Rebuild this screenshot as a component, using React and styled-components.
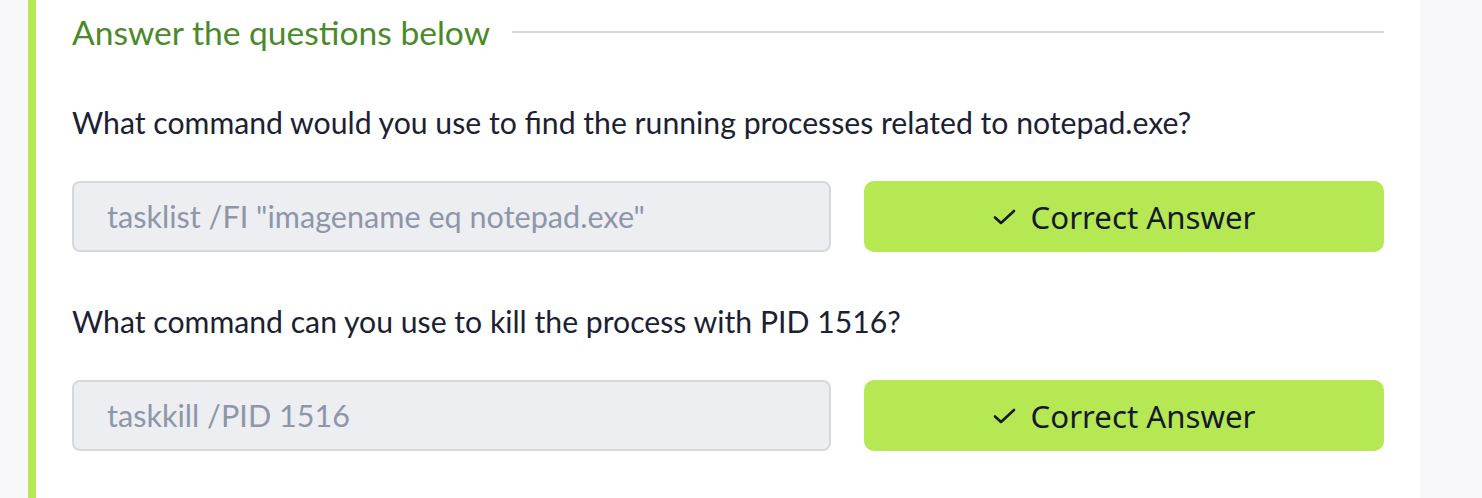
import React from 'react';
import styled, { createGlobalStyle } from 'styled-components';

const colors = {
  page: '#f8f8fa',
  lime: '#b5e853',
  green: '#4a8a2a',
  text: '#1b2132',
  muted: '#8e96a8',
  field: '#edeef2',
  fieldBorder: '#d5d8de',
  rule: '#d2d6dc',
};

const GlobalStyle = createGlobalStyle`
  html, body {
    margin: 0;
    padding: 0;
    background: ${colors.page};
  }
  * {
    box-sizing: border-box;
  }
`;

const Page = styled.div`
  display: flex;
  min-height: 498px;
  padding: 0 62px 0 28px;
  font-family: 'Lato', 'Liberation Sans', sans-serif;
`;

const Panel = styled.section`
  flex: 1;
  background: #ffffff;
  border-left: 8px solid ${colors.lime};
  padding: 10px 36px 0 36px;
`;

const HeadingRow = styled.div`
  display: flex;
  align-items: center;
  gap: 22px;
`;

const Heading = styled.h3`
  margin: 0;
  font-size: 33.6px;
  font-weight: 400;
  line-height: 44px;
  color: ${colors.green};
  white-space: nowrap;
`;

const Rule = styled.div`
  flex: 1;
  height: 2px;
  background: ${colors.rule};
`;

const Question = styled.div`
  margin-top: ${(p) => p.$top}px;
`;

const Prompt = styled.p`
  margin: 0;
  font-size: 30.2px;
  line-height: 40px;
  color: ${colors.text};
`;

const AnswerRow = styled.div`
  display: grid;
  grid-template-columns: 759fr 520fr;
  gap: 33px;
  margin-top: 39px;
`;

const AnswerField = styled.input`
  height: 71px;
  width: 100%;
  padding: 0 33px;
  border: 2px solid ${colors.fieldBorder};
  border-radius: 8px;
  background: ${colors.field};
  font-family: 'Lato', 'Liberation Sans', sans-serif;
  font-size: 30.6px;
  color: ${colors.muted};
  outline: none;

  &::placeholder {
    color: ${colors.muted};
  }
`;

const CorrectButton = styled.button`
  height: 71px;
  display: flex;
  align-items: center;
  justify-content: center;
  gap: 15px;
  border: none;
  border-radius: 10px;
  background: ${colors.lime};
  color: #141a2b;
  font-family: 'Noto Sans', 'Lato', sans-serif;
  font-size: 31.2px;
  cursor: default;
`;

const CheckIcon = () => (
  <svg width="23" height="16" viewBox="0 0 23 16" fill="none">
    <polyline
      points="2,8.5 8,14 21,2"
      stroke="#141a2b"
      strokeWidth="2.6"
      strokeLinecap="round"
      strokeLinejoin="round"
    />
  </svg>
);

const questions = [
  {
    prompt: 'What command would you use to find the running processes related to notepad.exe?',
    answer: 'tasklist /FI "imagename eq notepad.exe"',
    top: 48,
  },
  {
    prompt: 'What command can you use to kill the process with PID 1516?',
    answer: 'taskkill /PID 1516',
    top: 49,
  },
];

export default function App() {
  return (
    <>
      <GlobalStyle />
      <Page>
        <Panel>
          <HeadingRow>
            <Heading>Answer the questions below</Heading>
            <Rule />
          </HeadingRow>
          {questions.map((q) => (
            <Question key={q.answer} $top={q.top}>
              <Prompt>{q.prompt}</Prompt>
              <AnswerRow>
                <AnswerField readOnly value={q.answer} />
                <CorrectButton type="button">
                  <CheckIcon />
                  Correct Answer
                </CorrectButton>
              </AnswerRow>
            </Question>
          ))}
        </Panel>
      </Page>
    </>
  );
}
